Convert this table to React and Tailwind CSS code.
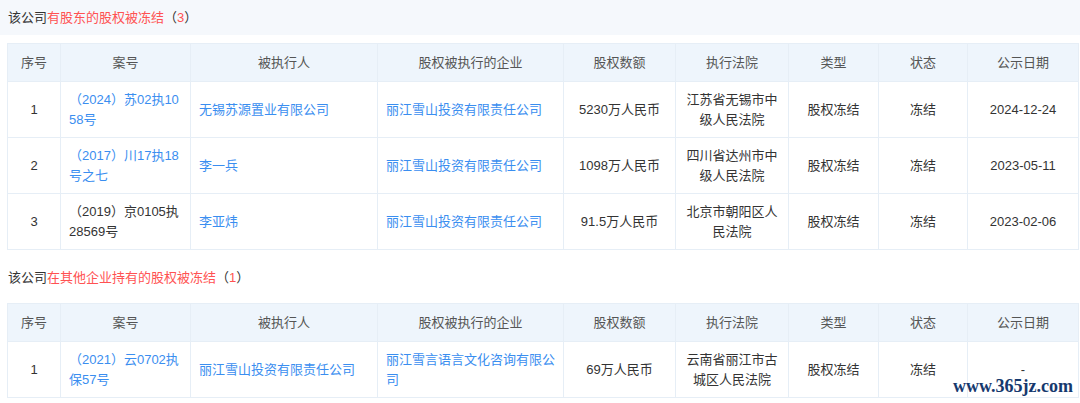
const cols = [53, 130, 187, 186, 112, 113, 90, 89, 111];
const heads = ["序号", "案号", "被执行人", "股权被执行的企业", "股权数额", "执行法院", "类型", "状态", "公示日期"];

const rows1 = [
  { no: "1", caseNo: "（2024）苏02执1058号", caseLink: true, person: "无锡苏源置业有限公司", company: "丽江雪山投资有限责任公司", amount: "5230万人民币", court: "江苏省无锡市中级人民法院", date: "2024-12-24" },
  { no: "2", caseNo: "（2017）川17执18号之七", caseLink: true, person: "李一兵", company: "丽江雪山投资有限责任公司", amount: "1098万人民币", court: "四川省达州市中级人民法院", date: "2023-05-11" },
  { no: "3", caseNo: "（2019）京0105执28569号", caseLink: false, person: "李亚炜", company: "丽江雪山投资有限责任公司", amount: "91.5万人民币", court: "北京市朝阳区人民法院", date: "2023-02-06" },
];

const rows2 = [
  { no: "1", caseNo: "（2021）云0702执保57号", caseLink: true, person: "丽江雪山投资有限责任公司", company: "丽江雪言语言文化咨询有限公司", amount: "69万人民币", court: "云南省丽江市古城区人民法院", date: "-" },
];

const Title = ({ red, count, band }) => (
  <div className={`h-[35px] flex items-center pl-[8px] text-[13px] text-[#333] ${band ? "bg-[#f5f8fc]" : "bg-white"}`}>
    该公司<span className="text-[#ff5252]">{red}</span>（<span className="text-[#ff5252]">{count}</span>）
  </div>
);

const Table = ({ rows }) => (
  <table className="ml-[7px] mt-[8px] w-[1071px] table-fixed border-collapse text-[13px] leading-[20px]">
    <colgroup>
      {cols.map((w, i) => (
        <col key={i} style={{ width: w }} />
      ))}
    </colgroup>
    <thead>
      <tr className="h-[38px] bg-[#eef5fc]">
        {heads.map((h) => (
          <th key={h} className="border border-[#e6eef6] font-normal text-[#555] text-center align-middle px-[8px]">
            {h}
          </th>
        ))}
      </tr>
    </thead>
    <tbody>
      {rows.map((r, i) => (
        <tr key={i} className="h-[56px] text-[#333]">
          <td className="border border-[#e6eef6] text-center px-[8px]">{r.no}</td>
          <td className={`border border-[#e6eef6] px-[8px] break-all ${r.caseLink ? "text-[#3a8ef0]" : ""}`}>{r.caseNo}</td>
          <td className="border border-[#e6eef6] px-[8px] text-[#3a8ef0]">{r.person}</td>
          <td className="border border-[#e6eef6] px-[8px] text-[#3a8ef0] break-all">{r.company}</td>
          <td className="border border-[#e6eef6] px-[8px] text-center">{r.amount}</td>
          <td className="border border-[#e6eef6] px-[8px] text-center">{r.court}</td>
          <td className="border border-[#e6eef6] px-[8px] text-center">股权冻结</td>
          <td className="border border-[#e6eef6] px-[8px] text-center">冻结</td>
          <td className="border border-[#e6eef6] px-[8px] text-center">{r.date}</td>
        </tr>
      ))}
    </tbody>
  </table>
);

export default function App() {
  return (
    <div className="relative w-[1080px] h-[403px] overflow-hidden bg-white font-['Liberation_Sans','Noto_Sans_CJK_SC',sans-serif]">
      <Title red="有股东的股权被冻结" count="3" band />
      <Table rows={rows1} />
      <div className="mt-[10px]">
        <Title red="在其他企业持有的股权被冻结" count="1" />
        <Table rows={rows2} />
      </div>
      <div className="absolute right-[7px] bottom-[8px] text-[18px] leading-none font-bold text-[#16396e] font-['Liberation_Serif',serif]">
        www.365jz.com
      </div>
    </div>
  );
}
